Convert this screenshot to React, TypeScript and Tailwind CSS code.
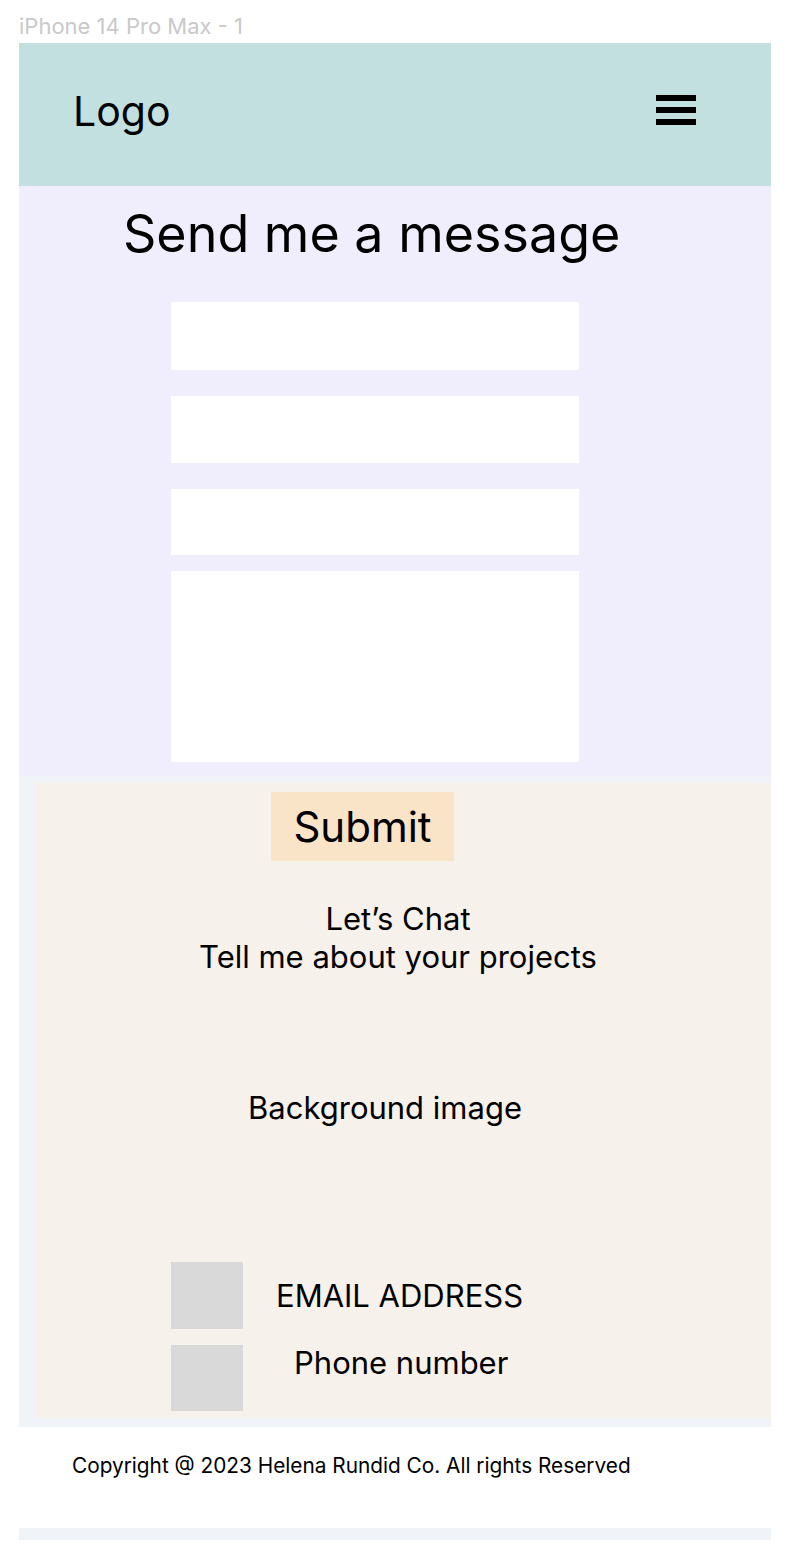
export default function App() {
  return (
    <div className="min-h-screen bg-white font-['Inter',_'Noto_Sans',_sans-serif] text-black">
      <div className="px-[19px] w-[790px]">
        {/* frame label */}
        <div className="h-[43px] pt-[12px] text-[22px] leading-[28px] text-[#c9c9c9]">
          iPhone 14 Pro Max - 1
        </div>

        <div className="w-[752px] bg-[#f0f3f8]">
          {/* Header */}
          <header className="h-[143px] bg-[#c3e0e0] flex items-center justify-between pl-[54px] pr-[75px]">
            <span className="text-[41px] leading-none -mt-[6px]">Logo</span>
            <div className="flex flex-col gap-[6px] -mt-[9px]">
              <span className="block w-[40px] h-[6px] bg-black" />
              <span className="block w-[40px] h-[6px] bg-black" />
              <span className="block w-[40px] h-[6px] bg-black" />
            </div>
          </header>

          {/* Contact form */}
          <section className="h-[590px] bg-[#f0eefc] pt-[18px]">
            <h1 className="ml-[104px] text-[52px] leading-[60px] font-normal">Send me a message</h1>
            <div className="ml-[152px] w-[408px] mt-[38px] flex flex-col">
              <div className="h-[68px] bg-white" />
              <div className="h-[67px] bg-white mt-[26px]" />
              <div className="h-[66px] bg-white mt-[26px]" />
              <div className="h-[191px] bg-white mt-[16px]" />
            </div>
          </section>

          {/* Chat block */}
          <div className="pt-[7px] pb-[9px] pl-[16px]">
            <section className="h-[635px] bg-[#f6f1eb] pt-[9px] flex flex-col">
              <button className="ml-[236px] w-[183px] h-[69px] bg-[#fae4c8] text-[42px] leading-none">
                Submit
              </button>
              <div className="mt-[39px] text-center text-[31px] leading-[38px] pr-[10px]">
                <p>Let’s Chat</p>
                <p>Tell me about your projects</p>
              </div>
              <p className="mt-[113px] text-center text-[31px] leading-[38px] pr-[36px]">Background image</p>
              <div className="mt-[135px] flex flex-col gap-[16px] pl-[136px]">
                <div className="flex items-center">
                  <div className="w-[72px] h-[67px] bg-[#d9d9d9]" />
                  <span className="ml-[33px] text-[31px] leading-[38px]">EMAIL ADDRESS</span>
                </div>
                <div className="flex items-center">
                  <div className="w-[72px] h-[66px] bg-[#d9d9d9]" />
                  <span className="ml-[51px] text-[31px] leading-[38px] -mt-[30px]">Phone number</span>
                </div>
              </div>
            </section>
          </div>

          {/* Footer */}
          <footer className="h-[101px] bg-white pl-[53px] pt-[25px]">
            <p className="text-[20.8px] leading-[28px]">Copyright @ 2023 Helena Rundid Co. All rights Reserved</p>
          </footer>
          <div className="h-[12px] bg-[#f0f3f8]" />
        </div>
      </div>
    </div>
  );
}
